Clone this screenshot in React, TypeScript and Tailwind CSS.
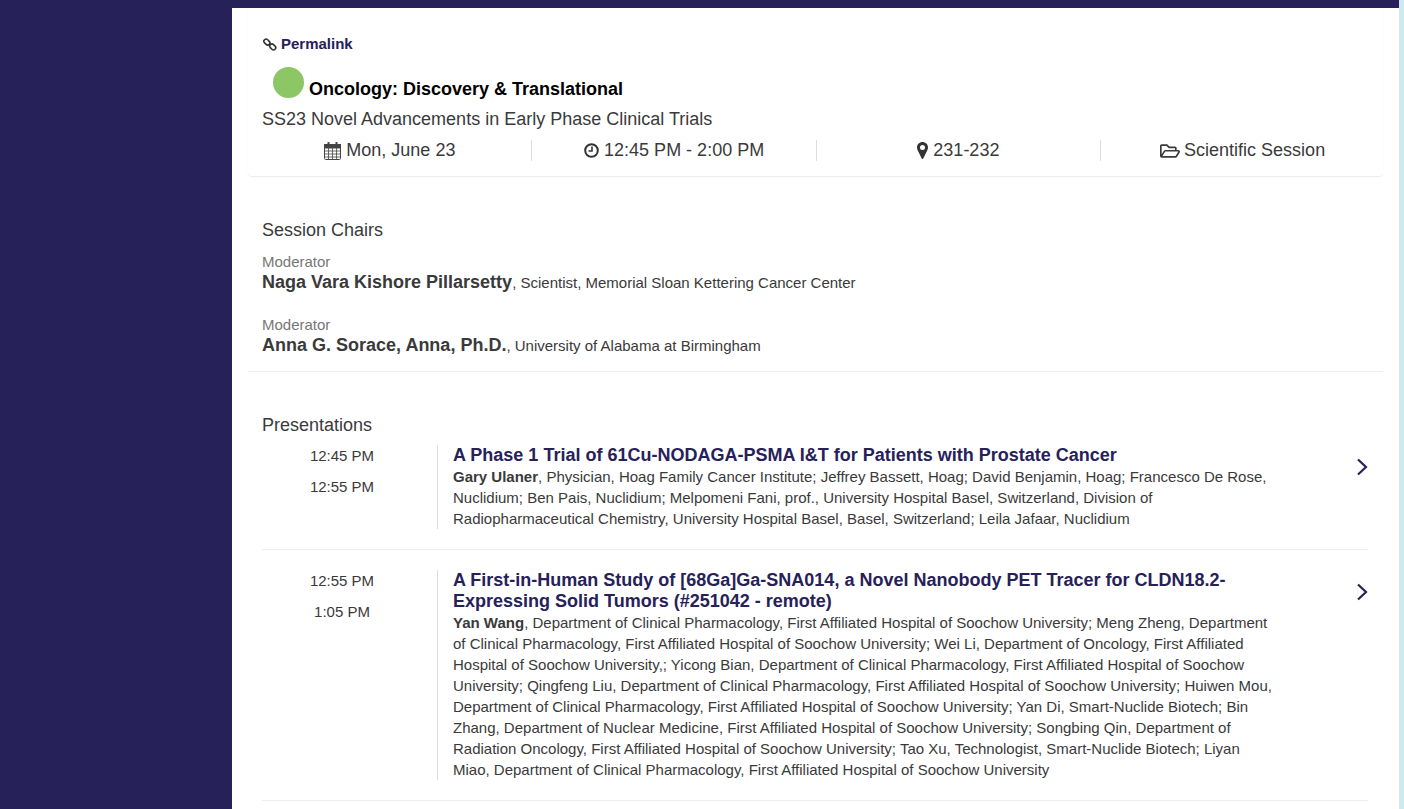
import React from 'react';
import { FaRegFolderOpen } from 'react-icons/fa';

const LinkIcon = () => (
  <svg width="14" height="13" viewBox="0 0 14 13" fill="none" stroke="#333" strokeWidth="1.6" className="shrink-0">
    <rect x="0.6" y="1.9" width="6.6" height="4.4" rx="2.2" transform="rotate(45 3.9 4.1)" />
    <rect x="6.4" y="6.7" width="6.6" height="4.4" rx="2.2" transform="rotate(45 9.7 8.9)" />
  </svg>
);

const CalendarIcon = () => (
  <svg width="17" height="18" viewBox="0 0 17 18" fill="none" stroke="#444" className="shrink-0">
    <rect x="0.5" y="2.5" width="16" height="15" rx="1" />
    <rect x="0.5" y="2.5" width="16" height="3.5" fill="#444" />
    <path d="M0.5 9h16M0.5 12h16M0.5 15h16M4.5 6v11M8.5 6v11M12.5 6v11" strokeWidth="0.8" />
    <path d="M4.5 0.5v3M12.5 0.5v3" strokeWidth="2" strokeLinecap="round" />
  </svg>
);

const ClockIcon = () => (
  <svg width="15" height="15" viewBox="0 0 15 15" fill="none" stroke="#333" strokeWidth="2" className="shrink-0">
    <circle cx="7.5" cy="7.5" r="6.3" />
    <path d="M8 3.5v4.5H4.5" strokeWidth="1.6" />
  </svg>
);

const PinIcon = () => (
  <svg width="11" height="17" viewBox="0 0 11 17" className="shrink-0">
    <path
      fill="#333"
      fillRule="evenodd"
      d="M5.5 0C2.5 0 0 2.4 0 5.4c0 1.2.3 2 .8 3L4.600 16.300c.4.800 1.400.800 1.800 0L10.200 8.400c.5-1 .8-1.800.8-3C11 2.400 8.500 0 5.500 0zM5.500 3a2.500 2.500 0 1 1 0 5 2.500 2.500 0 0 1 0-5z"
    />
  </svg>
);

const Chevron = () => (
  <svg width="12" height="18" viewBox="0 0 12 18" fill="none" stroke="#262158" strokeWidth="2.2" className="shrink-0">
    <path d="M2 1.500 10 9 2 16.500" />
  </svg>
);

const presentations = [
  {
    start: '12:45 PM',
    end: '12:55 PM',
    title: 'A Phase 1 Trial of 61Cu-NODAGA-PSMA I&T for Patients with Prostate Cancer',
    lead: 'Gary Ulaner',
    authors:
      ', Physician, Hoag Family Cancer Institute; Jeffrey Bassett, Hoag; David Benjamin, Hoag; Francesco De Rose, Nuclidium; Ben Pais, Nuclidium; Melpomeni Fani, prof., University Hospital Basel, Switzerland, Division of Radiopharmaceutical Chemistry, University Hospital Basel, Basel, Switzerland; Leila Jafaar, Nuclidium',
  },
  {
    start: '12:55 PM',
    end: '1:05 PM',
    title: 'A First-in-Human Study of [68Ga]Ga-SNA014, a Novel Nanobody PET Tracer for CLDN18.2-Expressing Solid Tumors (#251042 - remote)',
    lead: 'Yan Wang',
    authors:
      ', Department of Clinical Pharmacology, First Affiliated Hospital of Soochow University; Meng Zheng, Department of Clinical Pharmacology, First Affiliated Hospital of Soochow University; Wei Li, Department of Oncology, First Affiliated Hospital of Soochow University,; Yicong Bian, Department of Clinical Pharmacology, First Affiliated Hospital of Soochow University; Qingfeng Liu, Department of Clinical Pharmacology, First Affiliated Hospital of Soochow University; Huiwen Mou, Department of Clinical Pharmacology, First Affiliated Hospital of Soochow University; Yan Di, Smart-Nuclide Biotech; Bin Zhang, Department of Nuclear Medicine, First Affiliated Hospital of Soochow University; Songbing Qin, Department of Radiation Oncology, First Affiliated Hospital of Soochow University; Tao Xu, Technologist, Smart-Nuclide Biotech; Liyan Miao, Department of Clinical Pharmacology, First Affiliated Hospital of Soochow University',
  },
];

const chairs = [
  { name: 'Naga Vara Kishore Pillarsetty', org: ', Scientist, Memorial Sloan Kettering Cancer Center' },
  { name: 'Anna G. Sorace, Anna, Ph.D.', org: ', University of Alabama at Birmingham' },
];

export default function App() {
  return (
    <div className="h-[809px] overflow-hidden flex bg-[#d0e8ef] text-[#3a3a3a] font-['Liberation_Sans',Arial,sans-serif]">
      <aside className="w-[232px] shrink-0 bg-[#262158]" />
      <div className="w-[1167px] shrink-0">
        <div className="h-2 bg-[#262158]" />
        <main className="h-[801px] bg-white pl-4 pr-4">
          <section className="rounded-b shadow-[0_1px_1px_rgba(0,0,0,0.08)] h-[168px] pt-[27px]">
            <a className="flex items-center gap-[4px] ml-[15px] h-[18px] text-[15px] font-bold text-[#262158]">
              <LinkIcon />
              Permalink
            </a>
            <h2 className="flex items-end ml-[25px] mt-[14px] h-[33px] text-lg/[21px] font-bold text-black">
              <span className="w-[31px] h-[31px] rounded-full bg-[#8cc665] mr-[5px] mb-[2px]" />
              <span>Oncology: Discovery &amp; Translational</span>
            </h2>
            <p className="ml-[14px] mt-[9px] text-lg/[21px]">SS23 Novel Advancements in Early Phase Clinical Trials</p>
            <div className="grid grid-cols-4 -mr-[3px] -ml-px mt-[10px] text-lg/[21px]">
              <div className="flex justify-center items-center gap-[5px] pl-[2px] border-r border-[#ddd]">
                <CalendarIcon />
                Mon, June 23
              </div>
              <div className="flex justify-center items-center gap-[5px] pl-px border-r border-[#ddd]">
                <ClockIcon />
                12:45 PM - 2:00 PM
              </div>
              <div className="flex justify-center items-center gap-[5px] border-r border-[#ddd]">
                <PinIcon />
                231-232
              </div>
              <div className="flex justify-center items-center gap-[4px] pr-[2px]">
                <FaRegFolderOpen className="w-5 h-[18px] shrink-0" />
                Scientific Session
              </div>
            </div>
          </section>

          <section className="h-[196px] pt-[44px] px-[14px] border-b border-[#eee]">
            <h3 className="text-lg/[21px]">Session Chairs</h3>
            {chairs.map((chair) => (
              <div key={chair.name} className="mt-[11px] mb-[22px]">
                <div className="text-[15px]/[20px] text-[#777]">Moderator</div>
                <div className="text-[15px]/[21px]">
                  <strong className="text-lg/[21px]">{chair.name}</strong>
                  {chair.org}
                </div>
              </div>
            ))}
          </section>

          <section className="pt-[43px] ml-[14px] mr-[15px]">
            <h3 className="text-lg/[21px] mb-[9px]">Presentations</h3>
            {presentations.map((p) => (
              <div key={p.title} className="flex pb-5 mb-5 border-b border-[#eee]">
                <div className="w-[175px] shrink-0 pr-[15px] text-center text-[15px]/[21px]">
                  <div className="mb-[10px]">{p.start}</div>
                  <div>{p.end}</div>
                </div>
                <div className="w-[841px] shrink-0 border-l border-[#ddd] pl-[15px]">
                  <h4 className="text-lg/[21px] font-bold text-[#262158]">{p.title}</h4>
                  <p className="text-[15px]/[21px]">
                    <strong>{p.lead}</strong>
                    {p.authors}
                  </p>
                </div>
                <div className="flex-1 flex justify-end pt-[13px]">
                  <Chevron />
                </div>
              </div>
            ))}
          </section>
        </main>
      </div>
    </div>
  );
}
